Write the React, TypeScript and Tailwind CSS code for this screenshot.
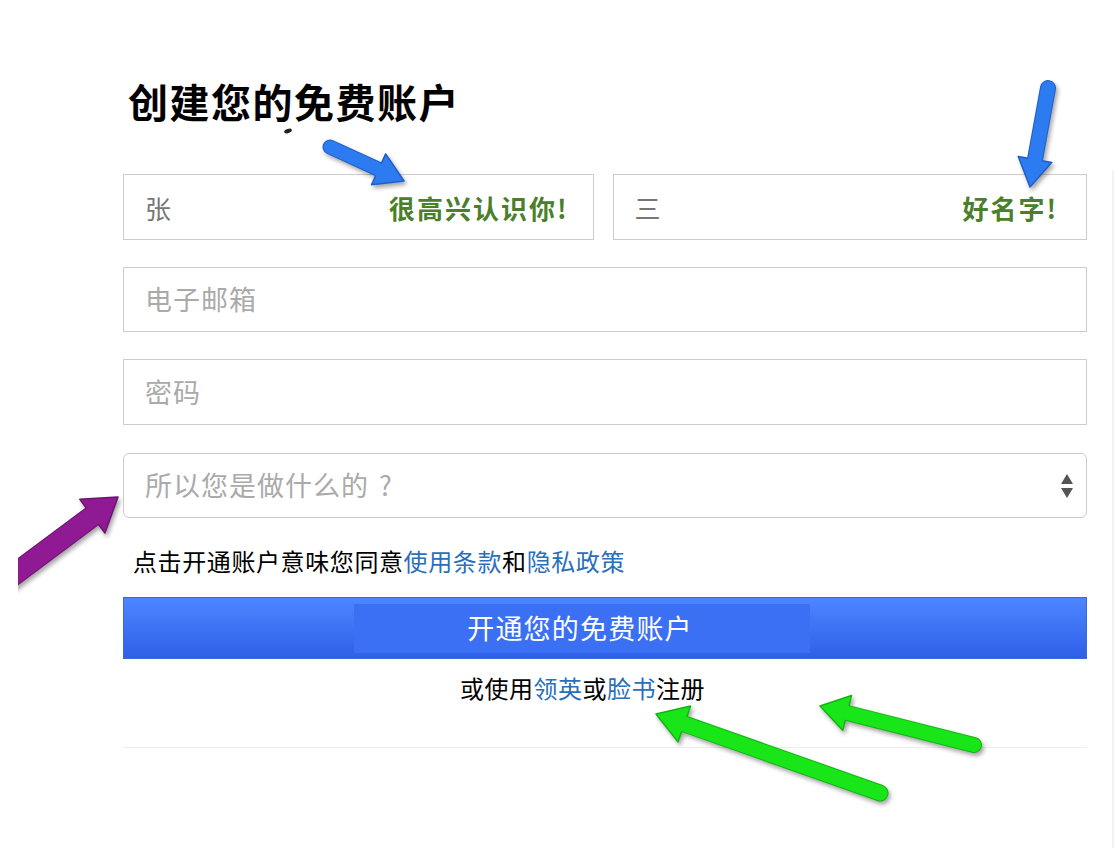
import React from "react";

type P = [number, number];

function Arrow({
  tail,
  tip,
  fill,
  edge,
  w,
  headLen,
  headW,
}: {
  tail: P;
  tip: P;
  fill: string;
  edge: string;
  w: number;
  headLen: number;
  headW: number;
}) {
  const dx = tip[0] - tail[0];
  const dy = tip[1] - tail[1];
  const len = Math.hypot(dx, dy);
  const ux = dx / len;
  const uy = dy / len;
  const nx = -uy;
  const ny = ux;
  const bx = tip[0] - ux * headLen;
  const by = tip[1] - uy * headLen;
  const head = [
    [tip[0], tip[1]],
    [bx + nx * headW / 2, by + ny * headW / 2],
    [bx - nx * headW / 2, by - ny * headW / 2],
  ]
    .map((p) => p.join(","))
    .join(" ");
  const sx = bx + ux * 2;
  const sy = by + uy * 2;
  return (
    <g style={{ filter: "drop-shadow(2px 3px 2px rgba(0,0,0,0.35))" }}>
      <line x1={tail[0]} y1={tail[1]} x2={sx} y2={sy} stroke={edge} strokeWidth={w + 2} strokeLinecap="round" />
      <polygon points={head} fill={fill} stroke={edge} strokeWidth={1.5} strokeLinejoin="round" />
      <line x1={tail[0]} y1={tail[1]} x2={sx} y2={sy} stroke={fill} strokeWidth={w} strokeLinecap="round" />
    </g>
  );
}

export default function App() {
  const font = { fontFamily: '"Noto Sans CJK SC", "Noto Sans", sans-serif' };
  return (
    <div className="relative w-[1116px] h-[848px] bg-white overflow-hidden" style={font}>
      <div className="flex">
        <div className="pl-[123px] w-[1087px] shrink-0">
          <h1 className="pt-[78px] text-[40px] leading-[46px] font-bold text-black pl-[5px] tracking-[1.5px]">
            创建您的免费账户
          </h1>

          <div className="mt-[50px] flex gap-[19px]">
            <div className="flex-1 h-[66px] border border-[#cccccc] flex items-center justify-between pl-[21px] pr-[24px]">
              <span className="text-[26px] text-[#777777]">张</span>
              <span className="text-[26px] font-bold text-[#4b7f2b] tracking-[2px]">很高兴认识你!</span>
            </div>
            <div className="flex-1 h-[66px] border border-[#cccccc] flex items-center justify-between pl-[21px] pr-[28px]">
              <span className="text-[26px] text-[#777777]">三</span>
              <span className="text-[26px] font-bold text-[#4b7f2b] tracking-[2px]">好名字!</span>
            </div>
          </div>

          <div className="mt-[27px] h-[65px] border border-[#cccccc] flex items-center pl-[21px]">
            <span className="text-[27px] text-[#aaaaaa] tracking-[1px]">电子邮箱</span>
          </div>

          <div className="mt-[27px] h-[66px] border border-[#cccccc] flex items-center pl-[21px]">
            <span className="text-[27px] text-[#aaaaaa] tracking-[1px]">密码</span>
          </div>

          <div className="mt-[28px] h-[65px] border border-[#cccccc] rounded-[6px] flex items-center justify-between pl-[21px] pr-[12px]">
            <span className="text-[27px] text-[#aaaaaa] tracking-[1px]">
              所以您是做什么的<span className="ml-[10px]">?</span>
            </span>
            <svg width="14" height="26" viewBox="0 0 14 26">
              <polygon points="7,1 13,11 1,11" fill="#555555" />
              <polygon points="7,25 13,15 1,15" fill="#555555" />
            </svg>
          </div>

          <p className="mt-[28px] pl-[10px] text-[24px] leading-[30px] text-black tracking-[0.6px]">
            点击开通账户意味您同意<span className="text-[#2a6fba]">使用条款</span>和<span className="text-[#2a6fba]">隐私政策</span>
          </p>

          <div className="mt-[21px] h-[62px] border border-[#3a68d6] bg-gradient-to-b from-[#4d86ff] to-[#2f5fe9] pl-[230px] pt-[6px]">
            <div className="w-[456px] h-[49px] bg-[#3c70f4] flex items-center justify-center">
              <span className="text-[27px] text-white tracking-[1.2px] pr-[4px]">开通您的免费账户</span>
            </div>
          </div>

          <p className="mt-[14px] text-center pr-[45px] text-[24px] leading-[30px] text-black tracking-[0.5px]">
            或使用<span className="text-[#2a6fba]">领英</span>或<span className="text-[#2a6fba]">脸书</span>注册
          </p>

          <div className="mt-[44px] h-px bg-[#eeeeee]" />
        </div>
        <div className="ml-[25px] pt-[170px] flex">
          <div className="w-[2px] h-[700px] bg-[#f2f2f2]" />
        </div>
      </div>

      <svg className="absolute inset-0 pointer-events-none" width="1116" height="848">
        <ellipse cx="288" cy="131" rx="4" ry="2" fill="#222" transform="rotate(-20 288 131)" />
        <Arrow tail={[330, 147]} tip={[404, 181]} fill="#2d7bf0" edge="#1d5fc9" w={13} headLen={28} headW={34} />
        <Arrow tail={[1048, 88]} tip={[1030, 187]} fill="#2d7bf0" edge="#1d5fc9" w={14} headLen={28} headW={34} />
        <Arrow tail={[-20, 600]} tip={[118, 497]} fill="#8f1a93" edge="#6e1272" w={20} headLen={32} headW={42} />
        <Arrow tail={[974, 745]} tip={[820, 706]} fill="#19e619" edge="#11b511" w={14} headLen={28} headW={36} />
        <Arrow tail={[880, 793]} tip={[656, 714]} fill="#19e619" edge="#11b511" w={15} headLen={30} headW={38} />
        <rect x="0" y="470" width="18" height="140" fill="white" />
      </svg>
    </div>
  );
}
